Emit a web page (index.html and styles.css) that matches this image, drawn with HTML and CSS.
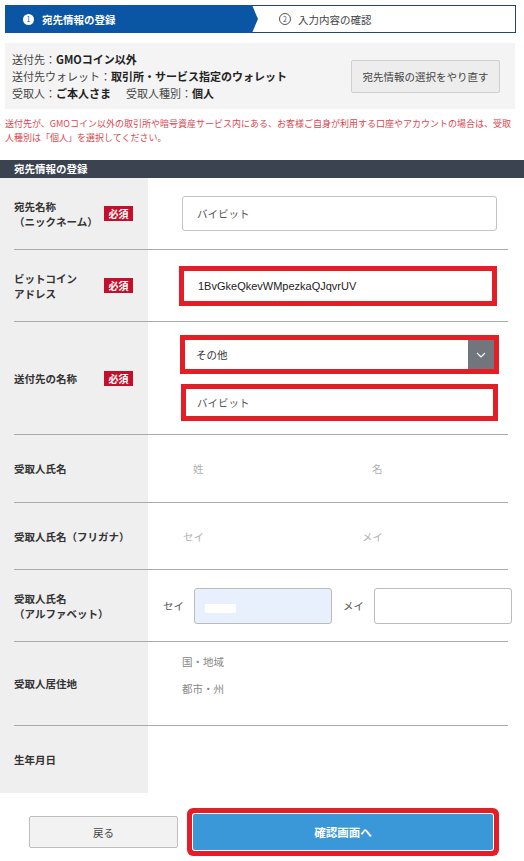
FILE: index.html
```html
<!DOCTYPE html>
<html lang="ja">
<head>
    <meta charset="UTF-8">
    <meta name="viewport" content="width=device-width, initial-scale=1.0">
    <title>宛先情報の登録</title>
    <link rel="stylesheet" href="styles.css">
</head>
<body>

<div class="steps">
    <div class="step step-active"><span class="step-num">1</span>宛先情報の登録</div>
    <div class="step step-next"><span class="step-num">2</span>入力内容の確認</div>
</div>

<div class="summary">
    <div class="summary-text">
        <div>送付先：<b>GMOコイン以外</b></div>
        <div>送付先ウォレット：<b>取引所・サービス指定のウォレット</b></div>
        <div>受取人：<b>ご本人さま</b><span class="gap"></span>受取人種別：<b>個人</b></div>
    </div>
    <button type="button" class="btn-redo">宛先情報の選択をやり直す</button>
</div>

<p class="note">送付先が、GMOコイン以外の取引所や暗号資産サービス内にある、お客様ご自身が利用する口座やアカウントの場合は、受取人種別は「個人」を選択してください。</p>

<h2 class="section-title">宛先情報の登録</h2>

<form class="form">
    <div class="row row-72">
        <div class="label"><span class="label-text">宛先名称<br>（ニックネーム）</span><span class="req">必須</span></div>
        <div class="value">
            <input type="text" class="field" value="バイビット">
        </div>
    </div>

    <div class="row row-72">
        <div class="label"><span class="label-text">ビットコイン<br>アドレス</span><span class="req">必須</span></div>
        <div class="value">
            <input type="text" class="field field-mark field-address" value="1BvGkeQkevWMpezkaQJqvrUV">
        </div>
    </div>

    <div class="row row-113">
        <div class="label"><span class="label-text">送付先の名称</span><span class="req">必須</span></div>
        <div class="value value-stack">
            <div class="select-mark">
                <span class="select-text">その他</span>
                <span class="select-arrow">
                    <svg width="10" height="6" viewBox="0 0 10 6"><path d="M1 1l4 4 4-4" fill="none" stroke="#fff" stroke-width="1.2"/></svg>
                </span>
            </div>
            <input type="text" class="field field-mark field-name" value="バイビット">
        </div>
    </div>

    <div class="row row-68">
        <div class="label"><span class="label-text">受取人氏名</span></div>
        <div class="value value-pair">
            <input type="text" class="ghost ghost-a" placeholder="姓">
            <input type="text" class="ghost ghost-a" placeholder="名">
        </div>
    </div>

    <div class="row row-67">
        <div class="label"><span class="label-text">受取人氏名（フリガナ）</span></div>
        <div class="value value-pair">
            <input type="text" class="ghost ghost-b" placeholder="セイ">
            <input type="text" class="ghost ghost-b" placeholder="メイ">
        </div>
    </div>

    <div class="row row-72">
        <div class="label"><span class="label-text">受取人氏名<br>（アルファベット）</span></div>
        <div class="value value-alpha">
            <span class="alpha-label">セイ</span>
            <div class="alpha-box alpha-filled"><span class="blot"></span></div>
            <span class="alpha-label">メイ</span>
            <div class="alpha-box"></div>
        </div>
    </div>

    <div class="row row-84">
        <div class="label"><span class="label-text">受取人居住地</span></div>
        <div class="value value-address">
            <div>国・地域</div>
            <div>都市・州</div>
        </div>
    </div>

    <div class="row row-67 row-last">
        <div class="label"><span class="label-text">生年月日</span></div>
        <div class="value"></div>
    </div>
</form>

<div class="actions">
    <button type="button" class="btn-back">戻る</button>
    <button type="button" class="btn-next">確認画面へ</button>
</div>

</body>
</html>
```

FILE: styles.css
```css
body {
    margin: 0;
    font-family: "Noto Sans CJK JP", "Noto Sans", sans-serif;
    font-size: 11px;
    color: #333;
    background: #fff;
}

/* steps */
.steps {
    display: flex;
    height: 28px;
    margin: 5px 8px 0 5px;
}

.step {
    display: flex;
    align-items: center;
    font-size: 10.5px;
    box-sizing: border-box;
}

.step-active {
    width: 253px;
    padding-left: 18px;
    background: #0b56a4;
    color: #fff;
    font-weight: bold;
    clip-path: polygon(0 0, 247px 0, 253px 50%, 247px 100%, 0 100%);
    margin-right: -253px;
    position: relative;
    z-index: 1;
}

.step-next {
    flex: 1;
    padding-left: 273px;
    border: 1px solid #23476c;
    color: #444;
}

.step-num {
    display: inline-flex;
    align-items: center;
    justify-content: center;
    width: 11px;
    height: 11px;
    border-radius: 50%;
    font-size: 7px;
    font-weight: normal;
    margin-right: 8px;
    box-sizing: border-box;
}

.step-active .step-num {
    background: #fff;
    color: #0b56a4;
}

.step-next .step-num {
    border: 1px solid #555;
    color: #555;
    width: 12px;
    height: 12px;
    margin-right: 7px;
}

/* summary box */
.summary {
    display: flex;
    align-items: center;
    justify-content: space-between;
    margin: 10px 9px 0 5px;
    padding: 8px 15px 7px 7px;
    background: #f4f4f4;
}

.summary-text {
    line-height: 17px;
    color: #444;
}

.summary-text b {
    color: #222;
}

.gap {
    display: inline-block;
    width: 15px;
}

.btn-redo {
    width: 149px;
    height: 33px;
    padding: 0;
    font-family: inherit;
    font-size: 10.5px;
    color: #444;
    background: #ededed;
    border: 1px solid #cfcfcf;
    border-radius: 2px;
}

.note {
    margin: 8px 12px 0 5px;
    font-size: 9px;
    line-height: 14px;
    color: #d8474f;
}

.section-title {
    margin: 15px 0 0;
    height: 18px;
    padding-left: 14px;
    background: #3b4350;
    color: #fff;
    font-size: 10.5px;
    line-height: 18px;
}

/* form table */
.form {
    margin: 0;
    background: linear-gradient(to right, #efefef 148px, #fff 148px);
}

.row {
    display: grid;
    grid-template-columns: 134px 1fr;
    margin: 0 16px 0 14px;
    border-bottom: 1px solid #aaa;
    box-sizing: border-box;
}

.row-last {
    border-bottom: none;
}

.row-72 { height: 72px; }
.row-113 { height: 113px; }
.row-68 { height: 68px; }
.row-67 { height: 67px; }
.row-84 { height: 84px; }

.label {
    display: flex;
    align-items: center;
    font-size: 10.5px;
    font-weight: bold;
    line-height: 15px;
    color: #333;
}

.label-text {
    flex: none;
    min-width: 90px;
    white-space: nowrap;
}

.req {
    display: inline-block;
    width: 29px;
    height: 15px;
    line-height: 15px;
    text-align: center;
    background: #c40f2c;
    color: #fff;
    font-size: 10px;
    font-weight: bold;
}

.value {
    display: flex;
    align-items: center;
    padding-left: 34px;
    padding-right: 11px;
}

.field {
    width: 100%;
    height: 35px;
    padding: 0 14px;
    box-sizing: border-box;
    font-family: inherit;
    font-size: 10.5px;
    color: #555;
    background: #fff;
    border: 1px solid #c4c4c4;
    border-radius: 3px;
}

.field-mark {
    border: 5px solid #e41e26;
    border-radius: 0;
}

.field-address {
    margin-left: -3px;
    width: calc(100% + 6px);
    height: 40px;
    padding-left: 14px;
    font-family: "Liberation Sans", Arial, sans-serif;
    font-size: 11px;
    color: #222;
}

.field-name {
    margin-left: -1px;
    width: calc(100% + 2px);
    height: 37px;
    padding-left: 11px;
}

.value-stack {
    flex-direction: column;
    justify-content: center;
    align-items: stretch;
    gap: 10px;
}

.select-mark {
    display: flex;
    align-items: center;
    height: 39px;
    margin: 0 -2px 0 -2px;
    border: 5px solid #e41e26;
    box-sizing: border-box;
    background: #fff;
}

.select-text {
    flex: 1;
    padding-left: 11px;
    font-size: 10.5px;
    color: #333;
}

.select-arrow {
    display: flex;
    align-items: center;
    justify-content: center;
    width: 26px;
    height: 100%;
    background: #71767d;
}

.value-pair {
    display: grid;
    grid-template-columns: 179px 1fr;
}

.ghost {
    width: 150px;
    border: none;
    background: transparent;
    font-family: inherit;
    font-size: 10.5px;
    padding: 0;
    outline: none;
}

.ghost::placeholder {
    color: #b0b0b0;
}

.ghost-a {
    padding-left: 11px;
}

.ghost-b {
    padding-left: 1px;
}

.value-alpha {
    padding-left: 15px;
    padding-right: 0;
    margin-right: -2px;
}

.alpha-label {
    width: 31px;
    font-size: 10.5px;
    color: #555;
}

.alpha-box {
    position: relative;
    width: 138px;
    height: 36px;
    box-sizing: border-box;
    border: 1px solid #bbb;
    border-radius: 3px;
    background: #fff;
    margin-right: 11px;
}

.alpha-box:last-child {
    margin-right: 0;
}

.alpha-filled {
    background: #e8f0fe;
}

.blot {
    position: absolute;
    left: 10px;
    top: 15px;
    width: 31px;
    height: 9px;
    background: #fff;
}

.value-address {
    flex-direction: column;
    align-items: flex-start;
    justify-content: flex-start;
    padding-top: 6px;
    line-height: 27px;
    font-size: 10.5px;
    color: #888;
}

/* bottom buttons */
.actions {
    display: flex;
    align-items: center;
    gap: 15px;
    padding: 21px 0 10px 29px;
}

.btn-back {
    width: 149px;
    height: 32px;
    font-family: inherit;
    font-size: 10.5px;
    color: #444;
    background: #f2f2f2;
    border: 1px solid #bdbdbd;
    border-radius: 2px;
}

.btn-next {
    width: 300px;
    height: 36px;
    font-family: inherit;
    font-size: 11.5px;
    font-weight: bold;
    color: #fff;
    background: #3a98d8;
    border: none;
    border-radius: 2px;
    box-shadow: 0 0 0 1px #fff, 0 0 0 6px #e41e26;
}
```
